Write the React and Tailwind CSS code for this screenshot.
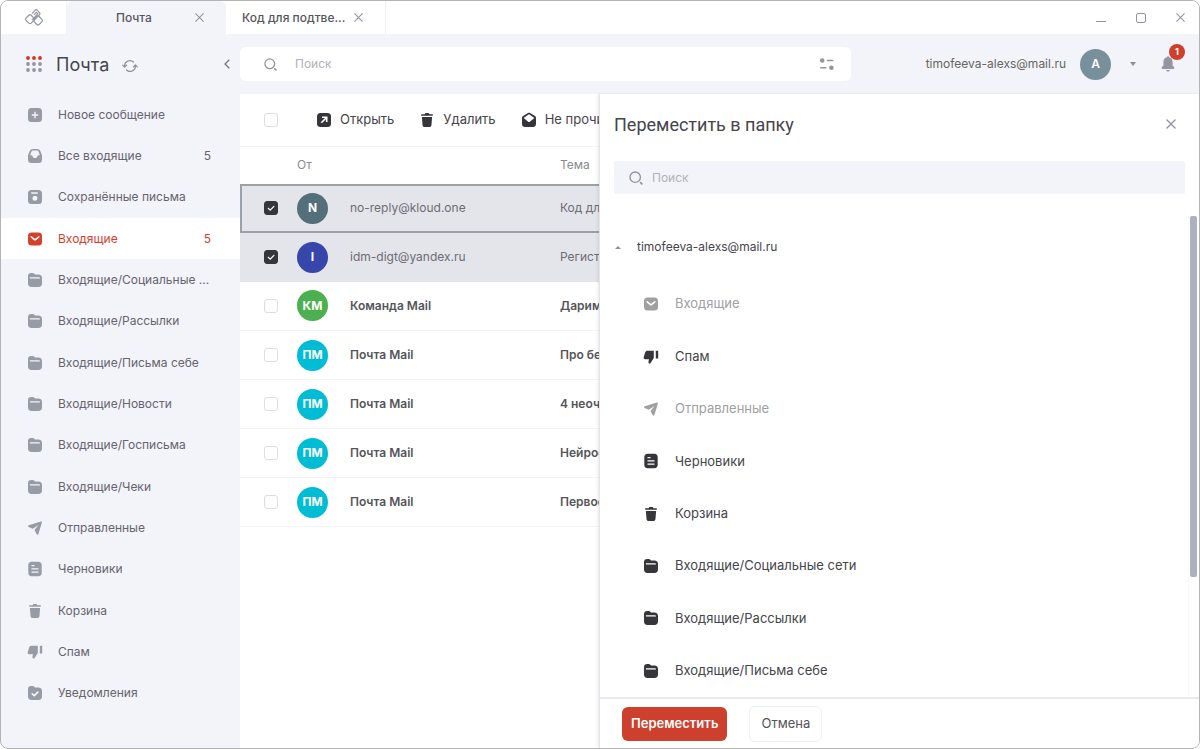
import { useState } from 'react';

const ICONS = {
  plus: (
    <path fillRule="evenodd" d="M4.500 1h7A3.500 3.500 0 0 1 15 4.500v7a3.500 3.500 0 0 1-3.500 3.500h-7A3.500 3.500 0 0 1 1 11.500v-7A3.500 3.500 0 0 1 4.500 1Zm2.800 3.800v2.500H4.800v1.400h2.500v2.500h1.400V8.700h2.500V7.300H8.700V4.800Z" />
  ),
  inbox: (
    <path fillRule="evenodd" d="M6 1h4c1.500 0 2.700.8 3.300 2.100L15 7.200V11.500a3.500 3.500 0 0 1-3.500 3.500h-7A3.500 3.500 0 0 1 1 11.500V7.200l1.700-4.100C3.300 1.800 4.500 1 6 1Zm.3 1.500c-1 0-1.600.5-1.900 1.300L3.100 7.300h1.300c.7 0 1 .3 1.200.9.400 1.200 1.200 1.900 2.400 1.900s2-.7 2.400-1.900c.2-.6.5-.9 1.200-.9h1.300l-1.300-3.500c-.3-.8-.9-1.300-1.900-1.300Z" />
  ),
  saved: (
    <path fillRule="evenodd" d="M4.500 1h7A3.500 3.500 0 0 1 15 4.500v7a3.500 3.500 0 0 1-3.500 3.500h-7A3.500 3.500 0 0 1 1 11.500v-7A3.500 3.500 0 0 1 4.500 1Zm-.3 2.300v1.500h6.600V3.300ZM8 6.700a2.500 2.500 0 1 0 0 5 2.500 2.500 0 0 0 0-5Z" />
  ),
  mail: (
    <>
      <rect x="1" y="1.500" width="14" height="13" rx="3.500" />
      <path d="m4.200 5.800 3 2.500c.5.400 1.100.4 1.600 0l3-2.500" fill="none" stroke="#fff" strokeWidth="1.500" strokeLinecap="round" />
    </>
  ),
  folder: (
    <path fillRule="evenodd" d="M1 4.200C1 2.200 2.200 1 4.200 1h1.500c.7 0 1.200.2 1.600.7l.8.900h3.400C13.700 2.600 15 4 15 6v5.500c0 2.200-1.300 3.500-3.500 3.500h-7C2.300 15 1 13.700 1 11.500Zm1.900 1v1.200h10.200c-.1-.8-.7-1.200-1.500-1.200Z" />
  ),
  sent: (
    <path fillRule="evenodd" d="M13.900 1.600c.7-.2 1.200.3 1 1l-3.500 11.300c-.3.900-1.400 1-1.800.2L7.500 10l4-5-5.700 3.800L1.600 6.900C.8 6.500.9 5.400 1.700 5.200Z" />
  ),
  draft: (
    <path fillRule="evenodd" d="M4.500.8h7c1.900 0 3.200 1.300 3.200 3.200v8c0 1.900-1.300 3.200-3.200 3.200h-7c-1.900 0-3.200-1.300-3.200-3.200V4C1.300 2.100 2.600.8 4.500.8Zm0 3.100v1.300h3V3.900Zm0 3.300v1.300h7V7.200Zm0 3.300v1.300h7v-1.300Z" />
  ),
  trash: (
    <path d="M5.600 2.200C5.800 1.400 6.400 1 7.100 1h1.800c.7 0 1.300.4 1.500 1.200h3.400v1.600H2.200V2.200ZM2.900 4.900h10.200l-.6 7.800c-.1 1.400-1 2.300-2.300 2.300H5.800c-1.300 0-2.200-.9-2.300-2.300Z" />
  ),
  spam: (
    <path d="M4.500 1.700h6.300v7.400l-3.500 5.300c-1.400.3-2.100-.7-1.800-2l.5-2.200H2.200C1 10.200.4 9.300.7 8.200L2.200 3.300c.3-1 1.200-1.600 2.300-1.600ZM12.800 1.700h2.400v7.800h-2.400Z" />
  ),
  notice: (
    <>
      <path d="M1 4.200C1 2.200 2.200 1 4.200 1h1.500c.7 0 1.200.2 1.600.7l.8.900h3.400C13.700 2.600 15 4 15 6v5.500c0 2.200-1.300 3.500-3.500 3.500h-7C2.300 15 1 13.700 1 11.500Z" />
      <path d="m5.200 8.800 2 1.900 3.600-3.600" fill="none" stroke="#fff" strokeWidth="1.500" strokeLinecap="round" strokeLinejoin="round" />
    </>
  ),
  open: (
    <>
      <rect x="1" y="1" width="14" height="14" rx="3.500" />
      <path d="m5.300 10.700 5-5M6 5.300h4.700V10" fill="none" stroke="#fff" strokeWidth="1.600" />
    </>
  ),
  unread: (
    <path fillRule="evenodd" d="M7 1.100c.6-.4 1.400-.4 2 0l5 3c.7.500 1 1.100 1 1.900v6c0 1.700-1.300 3-3 3H4c-1.700 0-3-1.300-3-3V6c0-.8.300-1.400 1-1.900Zm1 1.100L2.600 5.900 7.200 9.700c.5.400 1.100.4 1.600 0l4.600-3.800Z" />
  ),
};

const Icon = ({ name, className = '' }) => (
  <svg viewBox="0 0 16 16" fill="currentColor" className={`size-4 shrink-0 ${className}`} aria-hidden="true">
    {ICONS[name]}
  </svg>
);

const CloseIcon = ({ className = 'size-[9px]' }) => (
  <svg viewBox="0 0 10 10" className={className} fill="none" stroke="currentColor" strokeWidth="1.200" aria-hidden="true">
    <path d="m.5.5 9 9m0-9-9 9" />
  </svg>
);

const SearchIcon = ({ className }) => (
  <svg viewBox="0 0 14 14" className={className} fill="none" stroke="currentColor" strokeWidth="1.400" strokeLinecap="round" aria-hidden="true">
    <circle cx="6.200" cy="6.200" r="5.200" />
    <path d="m11.600 11.600 1.200 1.200" strokeWidth="1.800" />
  </svg>
);

const folders = [
  { icon: 'plus', label: 'Новое сообщение' },
  { icon: 'inbox', label: 'Все входящие', count: 5 },
  { icon: 'saved', label: 'Сохранённые письма' },
  { icon: 'mail', label: 'Входящие', count: 5, active: true },
  { icon: 'folder', label: 'Входящие/Социальные ...' },
  { icon: 'folder', label: 'Входящие/Рассылки' },
  { icon: 'folder', label: 'Входящие/Письма себе' },
  { icon: 'folder', label: 'Входящие/Новости' },
  { icon: 'folder', label: 'Входящие/Госписьма' },
  { icon: 'folder', label: 'Входящие/Чеки' },
  { icon: 'sent', label: 'Отправленные' },
  { icon: 'draft', label: 'Черновики' },
  { icon: 'trash', label: 'Корзина' },
  { icon: 'spam', label: 'Спам' },
  { icon: 'notice', label: 'Уведомления' },
];

const messages = [
  { id: 1, initials: 'N', color: 'bg-[#546e7a]', from: 'no-reply@kloud.one', subject: 'Код для', read: true },
  { id: 2, initials: 'I', color: 'bg-[#3646ab]', from: 'idm-digt@yandex.ru', subject: 'Регистрация', read: true },
  { id: 3, initials: 'КМ', color: 'bg-[#4caf50]', from: 'Команда Mail', subject: 'Дарим' },
  { id: 4, initials: 'ПМ', color: 'bg-[#00bcd4]', from: 'Почта Mail', subject: 'Про безопасность' },
  { id: 5, initials: 'ПМ', color: 'bg-[#00bcd4]', from: 'Почта Mail', subject: '4 неочевидных' },
  { id: 6, initials: 'ПМ', color: 'bg-[#00bcd4]', from: 'Почта Mail', subject: 'Нейросети' },
  { id: 7, initials: 'ПМ', color: 'bg-[#00bcd4]', from: 'Почта Mail', subject: 'Первое' },
];

const targets = [
  { icon: 'mail', label: 'Входящие', disabled: true },
  { icon: 'spam', label: 'Спам' },
  { icon: 'sent', label: 'Отправленные', disabled: true },
  { icon: 'draft', label: 'Черновики' },
  { icon: 'trash', label: 'Корзина' },
  { icon: 'folder', label: 'Входящие/Социальные сети' },
  { icon: 'folder', label: 'Входящие/Рассылки' },
  { icon: 'folder', label: 'Входящие/Письма себе' },
];

const Checkbox = ({ label, checked, onChange }) => (
  <span className="relative block size-[14px] shrink-0">
    <input
      type="checkbox"
      aria-label={label}
      checked={checked}
      onChange={onChange}
      className="block size-[14px] appearance-none rounded-[3px] border border-[#dcdde5] bg-white checked:border-[#36363a] checked:bg-[#36363a]"
    />
    {checked && (
      <svg viewBox="0 0 14 14" className="pointer-events-none absolute inset-0 size-[14px]" fill="none" stroke="#fff" strokeWidth="1.300">
        <path d="m4 7 2.200 2.100 4-4" />
      </svg>
    )}
  </span>
);

const TitleBar = () => (
  <div className="flex h-[33px] shrink-0 bg-white text-[#9296a0]">
    <div className="flex w-[66px] items-center justify-center border-r border-[#f3f4fa]">
      <svg viewBox="0 0 20 18" className="h-[18px] w-5" fill="none" stroke="currentColor" strokeWidth="1.200" aria-label="Логотип">
        <rect x="-3.600" y="-3.600" width="7.200" height="7.200" rx="1.600" transform="translate(6 10.200) rotate(45)" />
        <rect x="-3.600" y="-3.600" width="7.200" height="7.200" rx="1.600" transform="translate(14 11.500) rotate(45)" />
        <path d="m8 4.700 3.200-3.500c.6-.6 1.300-.6 1.900 0l2.500 2.600c.6.600.6 1.200 0 1.800l-6.200 6.600M10 5.800l2.300-2.400 1.500 1.500-6 6.200" />
      </svg>
    </div>
    <div className="flex w-[159px] items-center rounded-t-md bg-[#f3f4fa] pr-[22px] pl-[49px]">
      <span className="flex-1 text-[12px] font-medium text-[#55555c]">Почта</span>
      <button type="button" aria-label="Закрыть вкладку"><CloseIcon /></button>
    </div>
    <div className="flex w-[160px] items-center border-r border-[#f0f1f6] pr-[22px] pl-4">
      <span className="flex-1 text-[12px] font-medium whitespace-nowrap text-[#55555c]">Код для подтве...</span>
      <button type="button" aria-label="Закрыть вкладку"><CloseIcon /></button>
    </div>
    <div className="ml-auto flex items-center gap-[30px] pr-[14px]">
      <button type="button" aria-label="Свернуть" className="mt-2 h-px w-[10px] bg-[#9296a0]" />
      <button type="button" aria-label="Развернуть" className="size-[10px] rounded-xs border border-[#9296a0]" />
      <button type="button" aria-label="Закрыть"><CloseIcon /></button>
    </div>
  </div>
);

const Sidebar = () => (
  <aside className="flex w-[239px] shrink-0 flex-col pb-[34px]">
    <div className="flex h-[60px] shrink-0 items-center pr-[10px] pl-[25px]">
      <button type="button" aria-label="Приложения">
        <svg viewBox="0 0 16 16" className="size-4" fill="#9296a0">
          {[2, 8, 14].map((x) => (
            <g key={x}>
              <circle cx={x} cy="2" r="1.900" fill="#cc3a26" />
              <circle cx={x} cy="8" r="1.900" />
              <circle cx={x} cy="14" r="1.900" />
            </g>
          ))}
        </svg>
      </button>
      <h1 className="ml-[14px] text-[18px] text-[#45454b]">Почта</h1>
      <button type="button" aria-label="Обновить" className="ml-[13px] text-[#8b8f99]">
        <svg viewBox="0 0 16 14" className="mt-1 h-[14px] w-4" fill="none" stroke="currentColor" strokeWidth="1.200" strokeLinecap="round" strokeLinejoin="round">
          <path d="M2.600 8V6.800A5.300 5.300 0 0 1 11.500 3M.7 6.200l1.900 2 2-2M13.400 6v1.200A5.300 5.300 0 0 1 4.500 11M11.400 7.800l2-2 1.900 2" />
        </svg>
      </button>
      <button type="button" aria-label="Скрыть панель" className="ml-auto text-[#74767f]">
        <svg viewBox="0 0 6 10" className="h-[10px] w-[6px]" fill="none" stroke="currentColor" strokeWidth="1.300">
          <path d="M5.300.7 1 5l4.300 4.300" />
        </svg>
      </button>
    </div>
    <nav className="grid flex-1 auto-rows-fr grid-cols-1">
      {folders.map((folder) => (
        <a
          key={folder.label}
          href="#"
          className={`flex items-center pr-[29px] pl-[26px] text-[12px] ${
            folder.active ? 'bg-white text-[#d5402b]' : 'text-[#66636e]'
          }`}
        >
          <Icon name={folder.icon} className={folder.active ? '' : 'text-[#979ba5]'} />
          <span className="ml-[15px] flex-1 whitespace-nowrap">{folder.label}</span>
          {folder.count && <span>{folder.count}</span>}
        </a>
      ))}
    </nav>
  </aside>
);

const Header = () => (
  <header className="flex h-[60px] shrink-0 items-center pr-[24px]">
    <label className="flex h-[34px] w-[611px] items-center rounded-md bg-white pr-4 pl-6 text-[#9296a0]">
      <SearchIcon className="size-[13px] shrink-0" />
      <input
        type="search"
        aria-label="Поиск писем"
        placeholder="Поиск"
        className="ml-[18px] min-w-0 flex-1 bg-transparent text-[12px] outline-none placeholder:text-[#b0b1b8]"
      />
      <svg viewBox="0 0 16 14" className="h-[14px] w-4" fill="currentColor" stroke="currentColor" strokeWidth="1.600" strokeLinecap="round" aria-hidden="true">
        <circle cx="3.200" cy="3.500" r="1.500" />
        <path d="M8.500 3.500h5.300M1.800 10.700h5" />
        <circle cx="12.400" cy="10.700" r="1.500" />
      </svg>
    </label>
    <span className="ml-auto text-[12px] text-[#66645f]">timofeeva-alexs@mail.ru</span>
    <span className="ml-[14px] flex size-[31px] items-center justify-center rounded-full bg-[#78909c] text-[12px] font-semibold text-white">A</span>
    <button type="button" aria-label="Меню аккаунта" className="ml-[18px]">
      <svg viewBox="0 0 8 4" className="h-1 w-2" fill="#8b8f99"><path d="M1 0h6L4 4Z" /></svg>
    </button>
    <button type="button" aria-label="Уведомления" className="relative ml-6 text-[#9296a0]">
      <svg viewBox="0 0 14 16" className="h-4 w-[14px]" fill="currentColor">
        <path d="M7 .3c.6 0 1 .4 1 1 2.300.5 3.600 2.200 3.600 4.700v3.400l1.500 1.900c.6.800.2 1.700-.8 1.700H1.700c-1 0-1.400-.9-.8-1.700l1.500-1.900V6C2.400 3.500 3.700 1.800 6 1.300c0-.6.4-1 1-1ZM5.200 14h3.600c-.2 1-.9 1.600-1.800 1.600S5.400 15 5.200 14Z" />
      </svg>
      <span className="absolute -top-[12px] left-2 flex size-4 items-center justify-center rounded-full bg-[#cc402d] text-[9px] font-bold text-white">1</span>
    </button>
  </header>
);

const MessageList = () => {
  const [selected, setSelected] = useState([1, 2]);

  const toggle = (id) => {
    setSelected((prev) => (prev.includes(id) ? prev.filter((x) => x !== id) : [...prev, id]));
  };

  const toggleAll = () => {
    setSelected((prev) => (prev.length === messages.length ? [] : messages.map((m) => m.id)));
  };

  return (
    <section className="min-w-0 flex-1 overflow-hidden bg-white">
      <div className="flex h-[52px] items-center pl-[24px] text-[13px] text-[#45454b]">
        <Checkbox label="Выбрать все" checked={selected.length === messages.length} onChange={toggleAll} />
        <button type="button" className="ml-[38px] flex items-center gap-2">
          <Icon name="open" className="text-[#36363a]" />
          Открыть
        </button>
        <button type="button" className="ml-[25px] flex items-center gap-2">
          <Icon name="trash" className="text-[#36363a]" />
          Удалить
        </button>
        <button type="button" className="ml-[25px] flex items-center gap-2 whitespace-nowrap">
          <Icon name="unread" className="text-[#36363a]" />
          Не прочитано
        </button>
      </div>
      <table className="w-full min-w-[480px] table-fixed border-collapse text-left text-[12px]">
        <thead>
          <tr className="h-[37px] border-t border-[#f3f4fa] text-[#8a8a90]">
            <th className="w-[57px]" />
            <th className="w-[263px] font-normal">От</th>
            <th className="font-normal">Тема</th>
          </tr>
        </thead>
        <tbody>
          {messages.map((message, i) => {
            const checked = selected.includes(message.id);
            return (
              <tr
                key={message.id}
                className={`h-[49px] ${checked ? 'bg-[#e4e5eb]' : 'border-b border-[#f3f4fa]'} ${
                  i === 0 ? 'outline-2 -outline-offset-2 outline-[#9ba1aa]' : ''
                } ${message.read ? 'text-[#6c6c72]' : 'font-semibold text-[#55555a]'}`}
              >
                <td className="pl-[24px]">
                  <Checkbox label={message.from} checked={checked} onChange={() => toggle(message.id)} />
                </td>
                <td>
                  <div className="flex items-center gap-[22px]">
                    <span className={`flex size-[31px] items-center justify-center rounded-full text-[12px] font-bold text-white ${message.color}`}>
                      {message.initials}
                    </span>
                    {message.from}
                  </div>
                </td>
                <td className="whitespace-nowrap">{message.subject}</td>
              </tr>
            );
          })}
        </tbody>
      </table>
    </section>
  );
};

const MovePanel = () => (
  <section
    role="dialog"
    aria-label="Переместить в папку"
    className="z-10 flex w-[600px] shrink-0 flex-col border-l border-[#e4e5eb] bg-white shadow-[-1px_0_3px_rgba(0,0,0,0.1)]"
  >
    <div className="flex h-[60px] shrink-0 items-center justify-between pr-[23px] pl-[14px]">
      <h2 className="font-[Roboto,sans-serif] text-[18px] text-[#45454b]">Переместить в папку</h2>
      <button type="button" aria-label="Закрыть" className="text-[#8b8f99]"><CloseIcon className="size-[10px]" /></button>
    </div>
    <label className="mx-[14px] mt-[7px] flex h-[33px] shrink-0 items-center rounded-xs bg-[#f3f4fa] pl-[15px] text-[#9296a0]">
      <SearchIcon className="size-[14px] shrink-0" />
      <input
        type="search"
        aria-label="Поиск папки"
        placeholder="Поиск"
        className="ml-[9px] min-w-0 flex-1 bg-transparent text-[12px] outline-none placeholder:text-[#b0b1b8]"
      />
    </label>
    <div className="mt-[22px] flex flex-1">
      <div className="flex flex-1 flex-col text-[13px] text-[#45454b]">
        <button type="button" className="flex h-[62px] shrink-0 items-center gap-4 pl-[15px] text-[12px]">
          <svg viewBox="0 0 6 3" className="h-[3px] w-[6px]" fill="#8b8f99"><path d="M0 3h6L3 0Z" /></svg>
          timofeeva-alexs@mail.ru
        </button>
        <div className="grid flex-1 auto-rows-fr">
          {targets.map((target) => (
            <button
              key={target.label}
              type="button"
              disabled={target.disabled}
              className={`flex items-center gap-4 pl-[43px] text-left ${target.disabled ? 'text-[#a0a0a3]' : ''}`}
            >
              <Icon name={target.icon} className={target.disabled ? '' : 'text-[#36363a]'} />
              {target.label}
            </button>
          ))}
        </div>
      </div>
      <div className="w-[11px] border-l border-[#f8f8fc] pl-px">
        <div className="h-3/4 w-[7px] rounded-xs bg-[#adb1bf]" />
      </div>
    </div>
    <div className="flex h-[51px] shrink-0 items-center gap-[22px] border-t-2 border-[#e9eaf0] pl-[22px] text-[13px]">
      <button type="button" className="h-[34px] rounded-md bg-[#cc402d] px-[9px] font-semibold text-white">Переместить</button>
      <button type="button" className="h-[36px] rounded-md border border-[#eeeff6] px-[11px] text-[#55555a]">Отмена</button>
    </div>
  </section>
);

export default function App() {
  return (
    <div className="flex h-screen flex-col overflow-hidden rounded-[8px] border border-[#b4b4b4] bg-[#f3f4fa] font-[Inter,sans-serif]">
      <TitleBar />
      <div className="flex min-h-0 flex-1">
        <Sidebar />
        <div className="flex min-w-0 flex-1 flex-col">
          <Header />
          <div className="flex min-h-0 flex-1">
            <MessageList />
            <MovePanel />
          </div>
        </div>
      </div>
    </div>
  );
}
